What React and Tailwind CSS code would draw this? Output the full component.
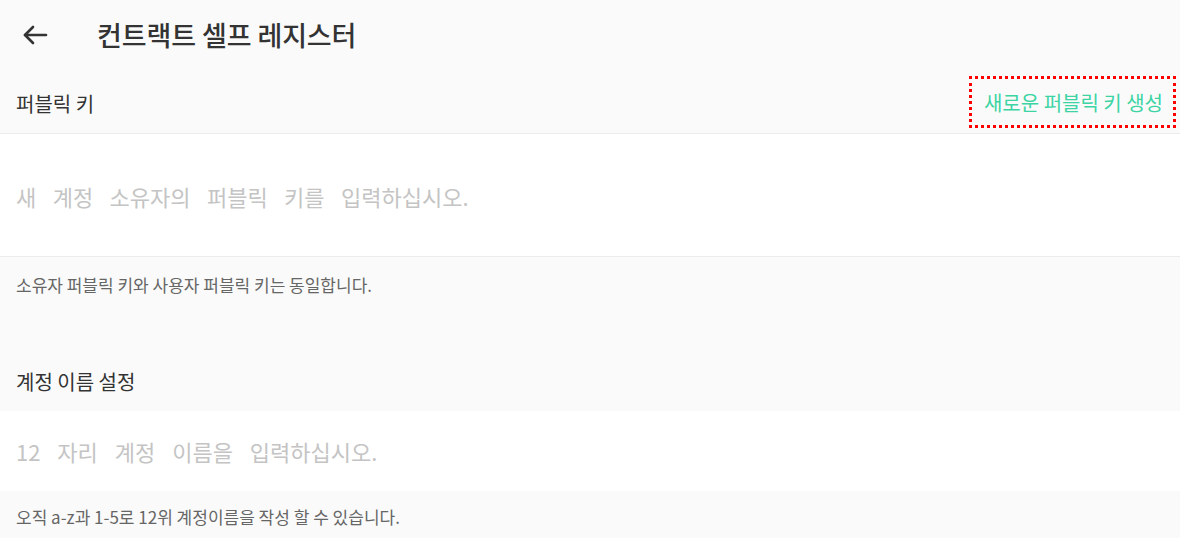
import React from "react";

const font = { fontFamily: '"Noto Sans CJK KR", "Noto Sans", sans-serif' };

export default function App() {
  return (
    <div className="w-[1180px] h-[538px] overflow-hidden bg-[#fafafa] text-[#333]" style={font}>
      {/* header */}
      <div className="h-[74px] flex items-center pb-1">
        <button className="w-[70px] h-[50px] flex items-center pl-[22px]">
          <svg width="26" height="22" viewBox="0 0 26 22" fill="none" stroke="#333" strokeWidth="2.6" strokeLinecap="round" strokeLinejoin="round">
            <path d="M24 11H3" />
            <path d="M11 3L3 11l8 8" />
          </svg>
        </button>
        <h1 className="ml-[27px] text-[27px] font-medium tracking-[-0.1px] text-[#333]">컨트랙트 셀프 레지스터</h1>
      </div>

      {/* public key label row */}
      <div className="h-[60px] flex items-start justify-between pl-4 pr-[4px] border-b border-[#ececec]">
        <span className="text-[20px] leading-[60px]">퍼블릭 키</span>
        <button className="mt-[2px] h-[52px] pl-[12px] pr-[10px] pt-[2px] border-[3px] border-dotted border-[#ff0000] text-[20px] text-[#3dd4a4]">
          새로운 퍼블릭 키 생성
        </button>
      </div>

      {/* public key input */}
      <div className="h-[123px] bg-white flex items-center px-4 border-b border-[#ececec]">
        <span className="text-[22px] text-[#c4c4c4] [word-spacing:11.5px] pt-[2px]">
          새 계정 소유자의 퍼블릭 키를 입력하십시오.
        </span>
      </div>
      <div className="h-[56px] flex items-center px-4">
        <span className="text-[17px] text-[#666]">소유자 퍼블릭 키와 사용자 퍼블릭 키는 동일합니다.</span>
      </div>

      {/* account name */}
      <div className="h-[98px] flex items-end pb-[14px] px-4">
        <span className="text-[20px]">계정 이름 설정</span>
      </div>
      <div className="h-[80px] bg-white flex items-center px-4">
        <span className="text-[22px] text-[#c4c4c4] [word-spacing:12px]">
          12 자리 계정 이름을 입력하십시오.
        </span>
      </div>
      <div className="h-[56px] flex items-center px-4 pb-[5px]">
        <span className="text-[17px] text-[#666]">오직 a-z과 1-5로 12위 계정이름을 작성 할 수 있습니다.</span>
      </div>
    </div>
  );
}
